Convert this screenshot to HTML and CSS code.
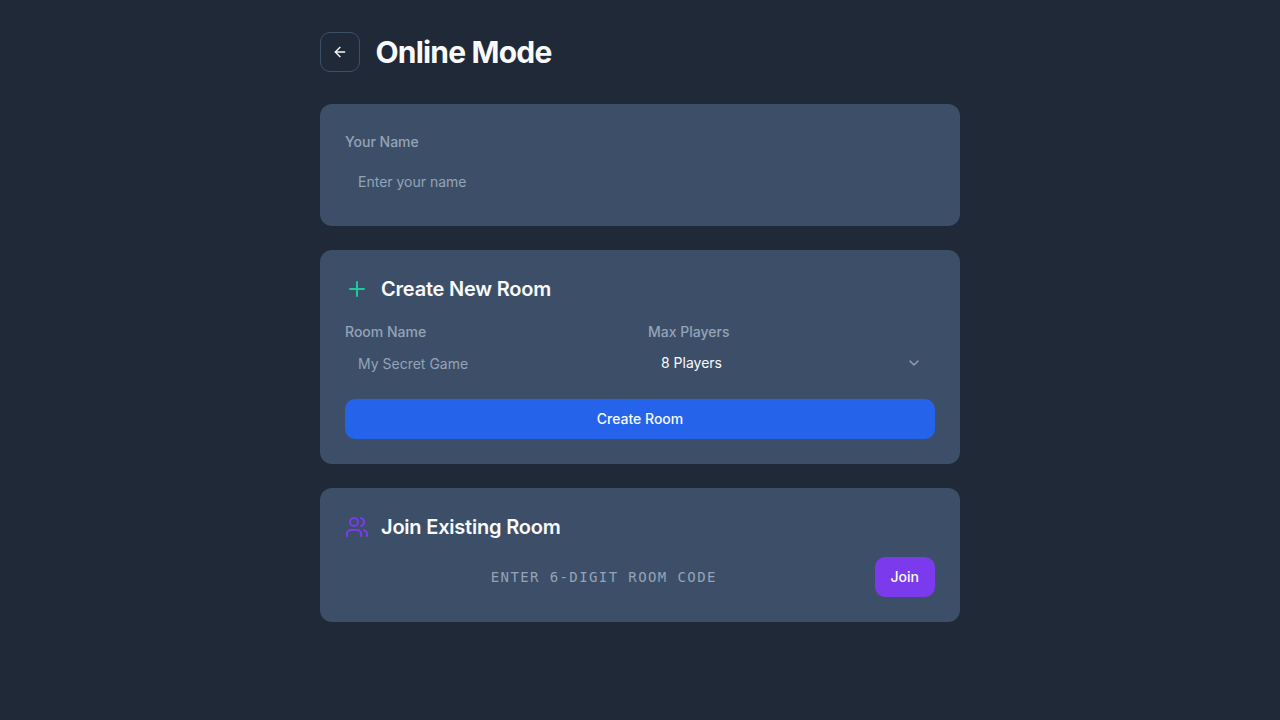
FILE: index.html
```html
<!DOCTYPE html>
<html lang="en">
<head>
<meta charset="utf-8">
<title>Online Mode</title>
<link rel="stylesheet" href="styles.css">
</head>
<body>
<main class="page">
  <header class="header">
    <button class="back" aria-label="Back">
      <svg class="icon-sm" viewBox="0 0 24 24"><path d="m12 19-7-7 7-7"/><path d="M19 12H5"/></svg>
    </button>
    <h1 class="title">Online Mode</h1>
  </header>
  <section class="card">
    <label class="label label-name" for="name">Your Name</label>
    <input class="input" id="name" placeholder="Enter your name">
  </section>
  <section class="card">
    <h2 class="heading">
      <svg class="icon plus" viewBox="0 0 24 24"><path d="M5 12h14"/><path d="M12 5v14"/></svg>
      Create New Room
    </h2>
    <div class="fields">
      <div class="field">
        <label class="label" for="room">Room Name</label>
        <input class="input" id="room" placeholder="My Secret Game">
      </div>
      <div class="field">
        <span class="label">Max Players</span>
        <button class="select"><span>8 Players</span>
          <svg class="icon-sm chevron" viewBox="0 0 24 24"><path d="m6 9 6 6 6-6"/></svg>
        </button>
      </div>
    </div>
    <button class="button create">Create Room</button>
  </section>
  <section class="card">
    <h2 class="heading">
      <svg class="icon users" viewBox="0 0 24 24"><path d="M16 21v-2a4 4 0 0 0-4-4H6a4 4 0 0 0-4 4v2"/><circle cx="9" cy="7" r="4"/><path d="M22 21v-2a4 4 0 0 0-3-3.87"/><path d="M16 3.13a4 4 0 0 1 0 7.75"/></svg>
      Join Existing Room
    </h2>
    <div class="join-row">
      <input class="input code" placeholder="ENTER 6-DIGIT ROOM CODE" aria-label="Room code">
      <button class="button join">Join</button>
    </div>
  </section>
</main>
</body>
</html>
```
FILE: styles.css
```css
*, *::before, *::after { box-sizing: border-box; margin: 0; padding: 0; }
body { background: #1f2937; color: #f8fafc; font: 14px/20px Inter, sans-serif; min-height: 100vh; }
button, input { font: inherit; color: inherit; border: 0; background: transparent; }
svg { fill: none; stroke: currentColor; stroke-width: 2; stroke-linecap: round; stroke-linejoin: round; flex: none; }
.page { width: 640px; margin: 0 auto; padding-top: 32px; display: flex; flex-direction: column; gap: 24px; }
.header { display: flex; align-items: center; gap: 16px; margin-bottom: 8px; }
.back { width: 40px; height: 40px; display: flex; align-items: center; justify-content: center; border: 1px solid #3d4f68; border-radius: 10px; }
.icon-sm { width: 16px; height: 16px; }
.icon { width: 24px; height: 24px; }
.title { margin-left: -0.5px; font-size: 30px; line-height: 36px; font-weight: 700; letter-spacing: -0.8px; }
.card { background: #3d4f68; border-radius: 12px; padding: 25px; }
.label { display: block; padding: 3px 0 1px; color: #94a3b8; font-weight: 500; }
.label-name { padding: 3px 0; margin-bottom: 6px; }
.input { display: block; width: 100%; height: 40px; padding: 8px 13px; outline: 0; }
.input::placeholder { color: #94a3b8; opacity: 1; }
.heading { display: flex; align-items: center; gap: 12px; font-size: 20px; line-height: 28px; font-weight: 600; letter-spacing: -0.21px; }
.plus { color: #20c997; }
.users { color: #7c3aed; }
.fields { display: grid; grid-template-columns: 1fr 1fr; gap: 16px; margin-top: 16px; }
.select { display: flex; align-items: center; justify-content: space-between; width: 100%; height: 40px; padding: 8px 13px; }
.chevron { color: #94a3b8; }
.button { height: 40px; border-radius: 10px; font-weight: 500; color: #f8fafc; }
.create { width: 100%; background: #2563eb; margin-top: 16px; }
.join-row { display: flex; gap: 12px; margin-top: 16px; }
.code { flex: 1; font-family: "DejaVu Sans Mono", monospace; letter-spacing: 1.4px; text-align: center; }
.join { background: #7c3aed; padding: 0 16px; }
```
